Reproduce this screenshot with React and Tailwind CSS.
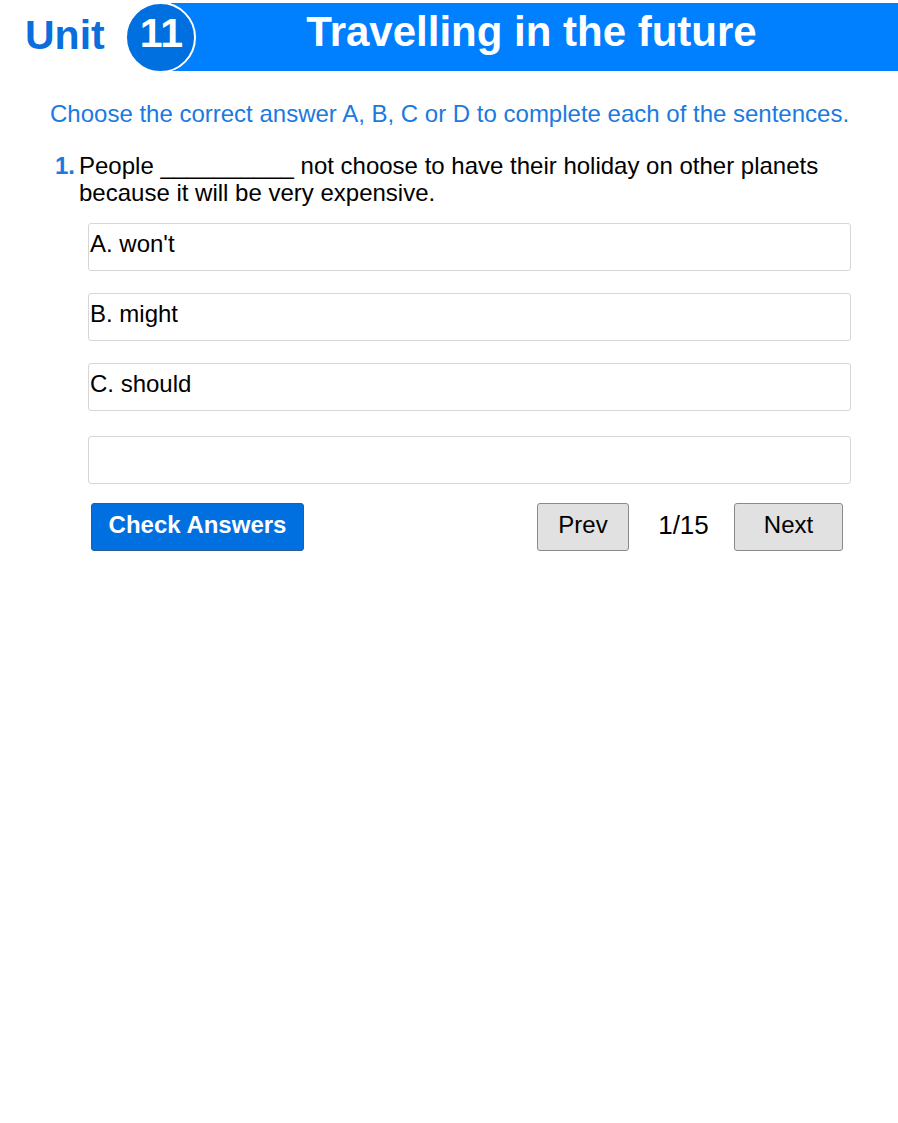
import React, { useState } from 'react';

const options = ["A. won't", 'B. might', 'C. should', ''];

export default function App() {
  const [picked, setPicked] = useState(null);

  return (
    <div className="w-[898px] min-h-[1123px] bg-white font-['Liberation_Sans',Arial,sans-serif]">
      {/* Header */}
      <div className="pt-[2px] flex items-center">
        <div className="w-[125px] pl-[25px] pb-[4px] text-[41px] font-bold leading-none text-[#0a6fdc]">Unit</div>
        <div className="relative flex-1 h-[71px]">
          <div className="absolute left-[46px] right-0 top-[1px] h-[68px] bg-[#0080ff] flex items-center justify-center pr-[6px] pb-[10px]">
            <span className="text-[42px] font-bold text-white leading-none">Travelling in the future</span>
          </div>
          <div className="absolute left-0 top-0 w-[71px] h-[71px] rounded-full bg-[#0070e0] border-2 border-white flex items-center justify-center pb-[9px] pl-[2px]">
            <span className="text-[41px] font-bold text-white leading-none">11</span>
          </div>
        </div>
      </div>

      {/* Instruction */}
      <p className="mt-[27px] pl-[50px] text-[24px] leading-[27px] text-[#1a7ae0]">
        Choose the correct answer A, B, C or D to complete each of the sentences.
      </p>

      {/* Question */}
      <div className="mt-[25px] flex pl-[55px] pr-[40px]">
        <span className="w-[24px] shrink-0 text-[24px] leading-[27px] font-bold text-[#1a7ae0]">1.</span>
        <p className="text-[24px] leading-[27px] text-black">
          People __________ not choose to have their holiday on other planets because it will be very expensive.
        </p>
      </div>

      <div className="mt-[17px] ml-[88px] w-[763px] flex flex-col gap-[22px]">
        {options.map((o, i) => (
          <button
            key={i}
            onClick={() => setPicked(i)}
            className={`h-[48px] text-left flex items-start pt-[6px] pl-[1px] border rounded-[3px] text-[24px] leading-[27px] text-black ${
              picked === i ? 'border-[#0070e0]' : 'border-[#d6d6d6]'
            } ${i === 3 ? 'mt-[3px]' : ''}`}
          >
            {o}
          </button>
        ))}
      </div>

      {/* Controls */}
      <div className="mt-[19px] flex items-center pl-[91px] pr-[55px]">
        <button className="w-[213px] h-[48px] pb-[4px] rounded-[3px] bg-[#0070e0] border border-[#2a5c9a] text-white text-[24px] font-bold">
          Check Answers
        </button>
        <div className="ml-auto flex items-center">
          <button className="w-[92px] h-[48px] pb-[4px] rounded-[3px] bg-[#e1e1e1] border border-[#8a8a8a] text-[24px] text-black">
            Prev
          </button>
          <span className="w-[105px] pb-[4px] pl-[4px] text-center text-[26px] text-black">1/15</span>
          <button className="w-[109px] h-[48px] pb-[4px] rounded-[3px] bg-[#e1e1e1] border border-[#8a8a8a] text-[24px] text-black">
            Next
          </button>
        </div>
      </div>
    </div>
  );
}
